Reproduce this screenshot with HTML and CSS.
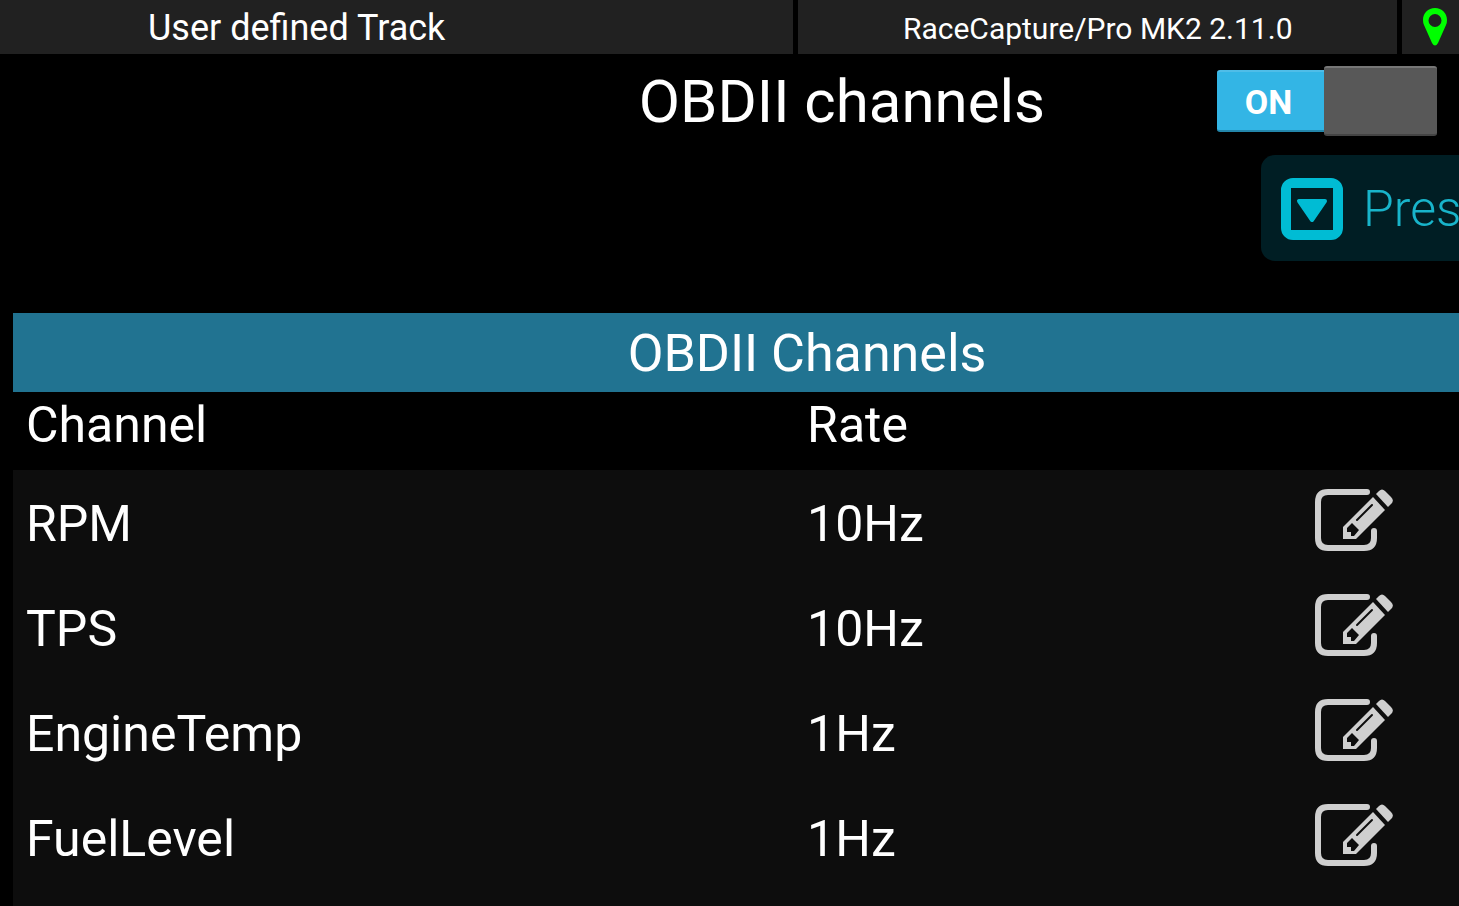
FILE: index.html
```html
<!DOCTYPE html>
<html lang="en">
<head>
  <meta charset="UTF-8" />
  <title>OBDII channels</title>
  <link rel="stylesheet" href="styles.css">
</head>
<body>
  <svg class="icon-defs" width="0" height="0" aria-hidden="true">
    <symbol id="edit" viewBox="0 0 78 62">
      <path d="M52 3H13Q3 3 3 13v36q0 10 10 10h36q10 0 10-10v-7" fill="none" stroke="#cfcfcf" stroke-width="6" stroke-linecap="round" />
      <path d="M28 50V38L58 8L70 21L41 50z" fill="#cfcfcf" stroke="#0d0d0d" stroke-width="3" paint-order="stroke" />
      <path d="M61 5L64 2Q67-1 70 2L76 8Q79 11 77 14L73 18z" fill="#cfcfcf" />
      <path d="M32 39l5-5l7 7l-5 6h-3v-4h-4z" fill="#0d0d0d" />
      <path d="M42 31L57 16" stroke="#0d0d0d" stroke-width="2" stroke-linecap="round" />
    </symbol>
  </svg>

  <header class="status-bar">
    <div class="status track">User defined Track</div>
    <div class="status device">RaceCapture/Pro MK2 2.11.0</div>
    <div class="status gps">
      <svg width="24" height="38" viewBox="0 0 24 38" role="img" aria-label="GPS">
        <path d="M12 0C5 0 0 5 0 12q0 3 1 5l8 18q3 5 6 0l8-18q1-2 1-5C24 5 19 0 12 0zM12 6a6 6 0 1 1 0 13a6 6 0 0 1 0-13z" fill="#00ff00" fill-rule="evenodd" />
      </svg>
    </div>
  </header>

  <main>
    <div class="title-row">
      <h1 id="title">OBDII channels</h1>
      <label class="switch">
        <input type="checkbox" aria-labelledby="title" checked />
        <span class="switch-on">ON</span>
        <span class="switch-thumb"></span>
      </label>
    </div>

    <div class="content">
      <button class="preset-btn">
        <svg width="62" height="62" viewBox="0 0 62 62" aria-hidden="true">
          <rect x="5" y="5" width="52" height="52" rx="7" fill="none" stroke="#00bcd4" stroke-width="10" />
          <rect x="10" y="10" width="42" height="42" fill="#001e24" />
          <path d="M18 23h26L31 42z" fill="#00bcd4" stroke="#00bcd4" stroke-width="4" stroke-linejoin="round" />
        </svg>
        Pres
      </button>

      <div class="panel">
        <table>
          <caption>OBDII Channels</caption>
          <thead>
            <tr>
              <th class="col-name">Channel</th>
              <th class="col-rate">Rate</th>
              <td></td>
            </tr>
          </thead>
          <tbody>
            <tr>
              <td>RPM</td>
              <td>10Hz</td>
              <td><button class="edit-btn" aria-label="Edit RPM"><svg width="78" height="62"><use href="#edit" /></svg></button></td>
            </tr>
            <tr>
              <td>TPS</td>
              <td>10Hz</td>
              <td><button class="edit-btn" aria-label="Edit TPS"><svg width="78" height="62"><use href="#edit" /></svg></button></td>
            </tr>
            <tr>
              <td>EngineTemp</td>
              <td>1Hz</td>
              <td><button class="edit-btn" aria-label="Edit EngineTemp"><svg width="78" height="62"><use href="#edit" /></svg></button></td>
            </tr>
            <tr>
              <td>FuelLevel</td>
              <td>1Hz</td>
              <td><button class="edit-btn" aria-label="Edit FuelLevel"><svg width="78" height="62"><use href="#edit" /></svg></button></td>
            </tr>
          </tbody>
        </table>
      </div>
    </div>
  </main>
</body>
</html>
```
FILE: styles.css
```css
* {
  box-sizing: border-box;
}

body {
  margin: 0;
  height: 100vh;
  display: flex;
  flex-direction: column;
  background: #000;
  color: #fff;
  font-family: Roboto, sans-serif;
  overflow: hidden;
}

.icon-defs {
  position: absolute;
}

.status-bar {
  display: grid;
  grid-template-columns: 57fr 43fr 57px;
  gap: 5px;
  height: 54px;
}

.status {
  display: flex;
  align-items: center;
  justify-content: center;
  padding-top: 2px;
  background: #212121;
}

.track {
  justify-content: flex-start;
  padding-left: 148px;
  font-size: 36px;
}

.device {
  font-size: 30px;
}

.gps {
  padding: 0 0 0 8px;
}

main {
  flex: 1;
  display: flex;
  flex-direction: column;
  min-height: 0;
}

.title-row {
  display: flex;
  align-items: center;
  height: 94px;
  padding: 0 22px 0 32%;
}

h1 {
  flex: 1;
  margin: 0;
  font-size: 60px;
  font-weight: 400;
  text-align: center;
}

.switch {
  display: flex;
  align-items: center;
  width: 220px;
  cursor: pointer;
}

.switch input {
  position: absolute;
  opacity: 0;
}

.switch-on {
  flex: 1;
  height: 62px;
  padding-right: 4px;
  border-radius: 3px 0 0 3px;
  border-top: 2px solid #4fbde8;
  border-bottom: 2px solid #2386ab;
  background: #33b5e5;
  font-size: 34px;
  font-weight: 700;
  line-height: 60px;
  text-align: center;
}

.switch-thumb {
  width: 113px;
  height: 70px;
  border-radius: 3px;
  border-top: 2px solid #777;
  border-bottom: 2px solid #444;
  background: #585858;
}

.content {
  flex: 1;
  display: flex;
  flex-direction: column;
  width: calc(100% + 155px);
  min-height: 0;
  padding: 7px 13px 0;
}

.preset-btn {
  align-self: flex-end;
  display: flex;
  align-items: center;
  gap: 20px;
  width: 340px;
  height: 106px;
  margin-bottom: 52px;
  padding: 2px 20px 0;
  border: none;
  border-radius: 14px;
  background: #001e24;
  color: #18b4ca;
  font-family: inherit;
  font-size: 50px;
  font-weight: 300;
  cursor: pointer;
}

.panel {
  flex: 1;
  min-height: 0;
  overflow: hidden;
  background: #0d0d0d;
}

table {
  width: 100%;
  table-layout: fixed;
  border-collapse: collapse;
  font-size: 50px;
}

caption {
  height: 79px;
  padding-top: 2px;
  background: #217391;
  font-size: 52px;
  line-height: 77px;
}

thead {
  background: #000;
}

th, td {
  padding: 0 16px;
  font-weight: 400;
  text-align: left;
}

th:first-child, td:first-child {
  padding-left: 13px;
}

thead tr {
  height: 78px;
}

th {
  padding-bottom: 12px;
}

tbody tr {
  height: 105px;
}

tbody td {
  padding-top: 3px;
}

tbody td:last-child {
  padding-top: 0;
  padding-bottom: 6px;
}

.col-name {
  width: 49%;
}

.col-rate {
  width: 32%;
}

.edit-btn {
  display: block;
  padding: 0;
  border: none;
  background: none;
  cursor: pointer;
}

.edit-btn svg {
  display: block;
}
```
